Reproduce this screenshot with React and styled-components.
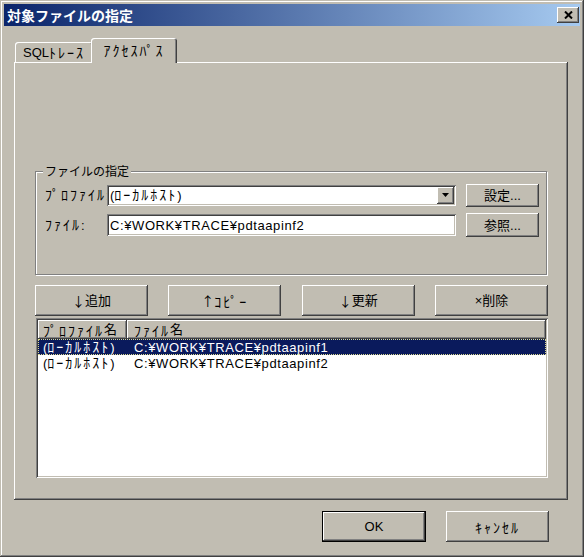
import React from "react";
import styled, { createGlobalStyle, css } from "styled-components";

const FACE = "#c1bdb2";
const SHADOW = "#808080";
const DARK = "#404040";
const NAVY = "#0a1a5c";

const raised = css`
  box-shadow: inset -1px -1px ${DARK}, inset 1px 1px #fff, inset -2px -2px ${SHADOW};
`;

const sunken = css`
  box-shadow: inset 1px 1px ${SHADOW}, inset -1px -1px #fff, inset 2px 2px ${DARK}, inset -2px -2px ${FACE};
`;

const GlobalStyle = createGlobalStyle`
  html, body {
    margin: 0;
    padding: 0;
    background: ${FACE};
  }
  * {
    box-sizing: border-box;
  }
`;

const Window = styled.div`
  width: 584px;
  height: 557px;
  padding: 4px;
  display: flex;
  flex-direction: column;
  background: ${FACE};
  font-family: "Liberation Sans", "Noto Sans CJK JP", sans-serif;
  font-size: 13px;
  line-height: 15px;
  color: #000;
  box-shadow: inset -1px -1px ${DARK}, inset 1px 1px ${FACE}, inset -2px -2px ${SHADOW}, inset 2px 2px #fff;
`;

const TitleBar = styled.div`
  height: 22px;
  display: flex;
  align-items: center;
  justify-content: space-between;
  padding: 0 1px 0 3px;
  background: linear-gradient(to right, #0a246a, #a6caf0);
`;

const TitleText = styled.span`
  color: #fff;
  font-family: "Noto Sans CJK JP", sans-serif;
  font-weight: 700;
  font-size: 14px;
  line-height: 22px;
`;

const CloseButton = styled.div`
  width: 22px;
  height: 16px;
  display: flex;
  align-items: center;
  justify-content: center;
  background: ${FACE};
  ${raised};
`;

const Body = styled.div`
  flex: 1;
  display: flex;
  flex-direction: column;
  padding: 12px 12px 0 10px;
`;

const Tabs = styled.div`
  height: 24px;
  display: flex;
  align-items: flex-end;
  padding-left: 1px;
`;

const Tab = styled.div`
  width: ${(p) => (p.$active ? 86 : 78)}px;
  height: ${(p) => (p.$active ? 25 : 20)}px;
  margin-left: ${(p) => (p.$active ? -2 : 0)}px;
  margin-bottom: ${(p) => (p.$active ? -1 : 0)}px;
  position: relative;
  z-index: ${(p) => (p.$active ? 1 : 0)};
  display: flex;
  align-items: center;
  justify-content: center;
  padding-bottom: ${(p) => (p.$active ? 1 : 0)}px;
  background: ${FACE};
  border-radius: 3px 3px 0 0;
  box-shadow: inset 1px 1px #fff, inset -1px 0 ${DARK}, inset -2px 0 ${SHADOW};
  white-space: nowrap;
`;

const Panel = styled.div`
  display: flex;
  flex-direction: column;
  padding: 109px 20px 22px 21px;
  box-shadow: inset -1px -1px ${DARK}, inset 1px 1px #fff, inset -2px -2px ${SHADOW};
`;

const GroupBox = styled.div`
  position: relative;
  height: 104px;
  margin-right: 1px;
  display: flex;
  flex-direction: column;
  gap: 6px;
  padding: 11px 0 0 9px;
  border: 1px solid ${SHADOW};
  box-shadow: inset 1px 1px #fff, 1px 1px #fff;
`;

const GroupLabel = styled.span`
  position: absolute;
  top: -9px;
  left: 7px;
  padding: 0 2px;
  background: ${FACE};
  font-family: "Noto Sans CJK JP", sans-serif;
  font-size: 12px;
  line-height: 16px;
`;

const FieldRow = styled.div`
  height: 24px;
  display: flex;
  align-items: center;
`;

const FieldLabel = styled.span`
  width: 62px;
  flex-shrink: 0;
  white-space: nowrap;
`;

const Combo = styled.div`
  width: 349px;
  height: 21px;
  display: flex;
  align-items: center;
  padding: 2px 2px 2px 3px;
  background: #fff;
  ${sunken};
`;

const ComboText = styled.span`
  flex: 1;
  white-space: nowrap;
`;

const DropButton = styled.div`
  width: 17px;
  height: 17px;
  display: flex;
  align-items: center;
  justify-content: center;
  background: ${FACE};
  ${raised};
`;

const TextBox = styled.div`
  width: 349px;
  height: 22px;
  display: flex;
  align-items: center;
  padding-left: 3px;
  background: #fff;
  white-space: nowrap;
  ${sunken};
`;

const Button = styled.div`
  width: ${(p) => p.$w}px;
  height: ${(p) => p.$h}px;
  margin-left: ${(p) => p.$ml || 0}px;
  flex-shrink: 0;
  display: flex;
  align-items: center;
  justify-content: center;
  background: ${FACE};
  white-space: nowrap;
  ${(p) =>
    p.$default
      ? css`
          box-shadow: inset 0 0 0 1px #000, inset -2px -2px ${DARK}, inset 2px 2px #fff, inset -3px -3px ${SHADOW};
        `
      : raised};
`;

const ActionRow = styled.div`
  display: flex;
  justify-content: space-between;
  margin-top: 10px;
`;

const ListBox = styled.div`
  height: 160px;
  margin: 2px 0 0 1px;
  padding: 2px;
  display: flex;
  flex-direction: column;
  background: #fff;
  ${sunken};
`;

const ListHeader = styled.div`
  height: 19px;
  display: flex;
  flex-shrink: 0;
`;

const HeaderCell = styled.div`
  width: ${(p) => (p.$w ? `${p.$w}px` : "auto")};
  flex: ${(p) => (p.$w ? "0 0 auto" : "1")};
  display: flex;
  align-items: center;
  padding-left: ${(p) => p.$pl}px;
  background: ${FACE};
  white-space: nowrap;
  ${raised};
`;

const Row = styled.div`
  height: 16px;
  display: flex;
  align-items: center;
  background: ${(p) => (p.$selected ? NAVY : "#fff")};
  color: ${(p) => (p.$selected ? "#fff" : "#000")};
  outline: ${(p) => (p.$selected ? "1px dotted #d8d890" : "none")};
  outline-offset: -1px;
  white-space: nowrap;
`;

const Cell = styled.span`
  width: ${(p) => (p.$w ? `${p.$w}px` : "auto")};
  flex-shrink: 0;
  padding-left: ${(p) => p.$pl}px;
`;

const Footer = styled.div`
  display: flex;
  justify-content: flex-end;
  gap: 20px;
  margin-top: 11px;
  padding-right: 19px;
`;

const Hw = styled.span`
  font-family: "Noto Sans CJK JP", sans-serif;
  font-size: 14px;
  line-height: 14px;
  letter-spacing: 2px;
`;

const Arrow = styled.span`
  font-family: "Noto Sans CJK JP", sans-serif;
  font-size: 13px;
  line-height: 14px;
`;

const Path = styled.span`
  letter-spacing: 0.6px;
`;

const CloseIcon = () => (
  <svg width="9" height="8" viewBox="0 0 9 8">
    <path d="M1 0.5 L8 7.5 M8 0.5 L1 7.5" stroke="#000" strokeWidth="2" fill="none" />
  </svg>
);

const DownTriangle = () => (
  <svg width="7" height="4" viewBox="0 0 7 4">
    <path d="M0 0 H7 L3.5 4 Z" fill="#000" />
  </svg>
);

const local = (
  <>
    (<Hw>ﾛｰｶﾙﾎｽﾄ</Hw>)
  </>
);

const rows = [
  { profile: local, file: "C:¥WORK¥TRACE¥pdtaapinf1", selected: true },
  { profile: local, file: "C:¥WORK¥TRACE¥pdtaapinf2", selected: false },
];

export default function App() {
  return (
    <>
      <GlobalStyle />
      <Window>
        <TitleBar>
          <TitleText>対象ファイルの指定</TitleText>
          <CloseButton>
            <CloseIcon />
          </CloseButton>
        </TitleBar>

        <Body>
          <Tabs>
            <Tab>
              SQL<Hw>ﾄﾚｰｽ</Hw>
            </Tab>
            <Tab $active>
              <Hw>ｱｸｾｽﾊﾟｽ</Hw>
            </Tab>
          </Tabs>

          <Panel>
            <GroupBox>
              <GroupLabel>ファイルの指定</GroupLabel>
              <FieldRow>
                <FieldLabel>
                  <Hw>ﾌﾟﾛﾌｧｲﾙ</Hw>:
                </FieldLabel>
                <Combo>
                  <ComboText>{local}</ComboText>
                  <DropButton>
                    <DownTriangle />
                  </DropButton>
                </Combo>
                <Button $w={73} $h={23} $ml={10}>設定...</Button>
              </FieldRow>
              <FieldRow>
                <FieldLabel>
                  <Hw>ﾌｧｲﾙ</Hw>:
                </FieldLabel>
                <TextBox>
                  <Path>C:¥WORK¥TRACE¥pdtaapinf2</Path>
                </TextBox>
                <Button $w={73} $h={24} $ml={10}>参照...</Button>
              </FieldRow>
            </GroupBox>

            <ActionRow>
              <Button $w={113} $h={31}>
                <Arrow>↓</Arrow>追加
              </Button>
              <Button $w={113} $h={31}>
                <Arrow>↑</Arrow>
                <Hw>ｺﾋﾟｰ</Hw>
              </Button>
              <Button $w={113} $h={31}>
                <Arrow>↓</Arrow>更新
              </Button>
              <Button $w={113} $h={31}>×削除</Button>
            </ActionRow>

            <ListBox>
              <ListHeader>
                <HeaderCell $w={89} $pl={5}>
                  <Hw>ﾌﾟﾛﾌｧｲﾙ</Hw>名
                </HeaderCell>
                <HeaderCell $pl={7}>
                  <Hw>ﾌｧｲﾙ</Hw>名
                </HeaderCell>
              </ListHeader>
              {rows.map((r, i) => (
                <Row key={i} $selected={r.selected}>
                  <Cell $w={89} $pl={5}>
                    {r.profile}
                  </Cell>
                  <Cell $pl={7}>
                    <Path>{r.file}</Path>
                  </Cell>
                </Row>
              ))}
            </ListBox>
          </Panel>

          <Footer>
            <Button $w={104} $h={31} $default>
              OK
            </Button>
            <Button $w={103} $h={31}>
              <Hw>ｷｬﾝｾﾙ</Hw>
            </Button>
          </Footer>
        </Body>
      </Window>
    </>
  );
}
